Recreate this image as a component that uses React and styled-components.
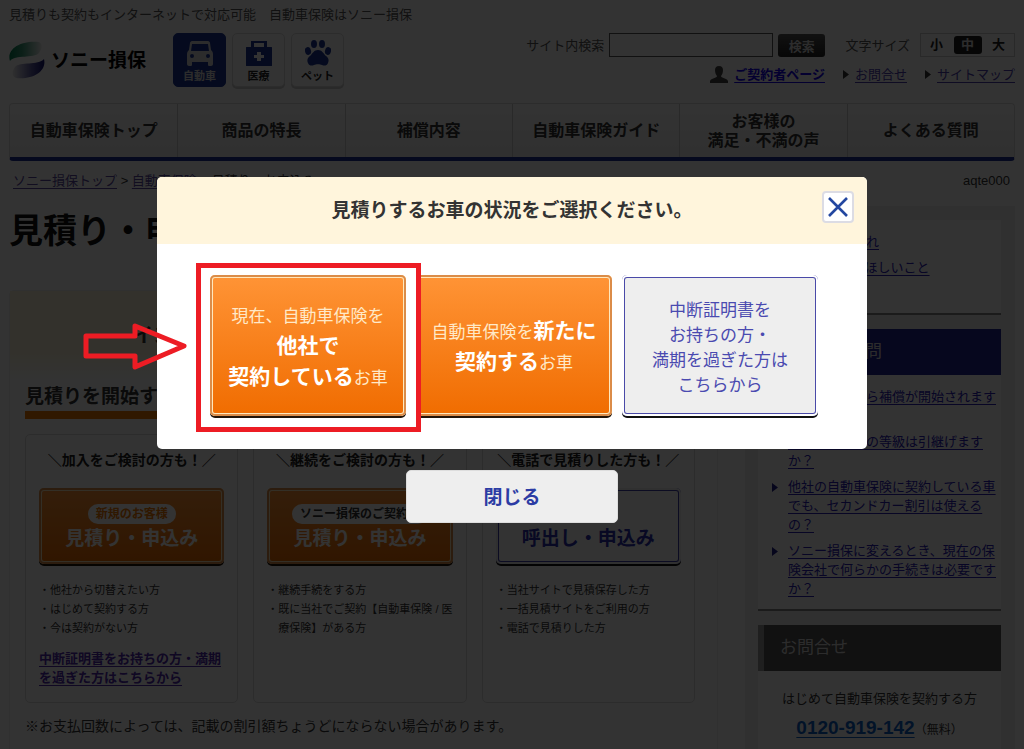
import React, { useState } from "react";
import styled, { createGlobalStyle, css } from "styled-components";

const GlobalStyle = createGlobalStyle`
  * {
    box-sizing: border-box;
  }
  body {
    margin: 0;
    overflow: hidden;
    background: #fff;
    color: #333;
    font-family: "Liberation Sans", "Noto Sans CJK JP", sans-serif;
    font-size: 13px;
    line-height: 19px;
  }
  button, input {
    font-family: inherit;
  }
  h1, h2, h3, p, ul {
    margin: 0;
    padding: 0;
  }
  ul {
    list-style: none;
  }
  a {
    color: #2a20b8;
    text-underline-offset: 3px;
  }
`;

const Page = styled.div`
  padding: 3px 9px 0;
`;

const Lead = styled.p`
  color: #555;
  line-height: 24px;
`;

const Header = styled.header`
  display: flex;
  justify-content: space-between;
  margin-top: 6px;
`;

const Brand = styled.div`
  display: flex;
  align-items: center;
  gap: 6px;
`;

const Logo = styled.a`
  display: flex;
  align-items: center;
  gap: 6px;
  margin-right: 21px;
  color: #000;
  font-size: 19px;
  font-weight: bold;
  text-decoration: none;
`;

const Tile = styled.a`
  display: flex;
  flex-direction: column;
  align-items: center;
  justify-content: flex-end;
  gap: 2px;
  width: 53px;
  height: 54px;
  padding-bottom: 2px;
  border: 1px solid ${(props) => (props.$active ? "#1a3694" : "#ddd")};
  border-radius: 5px;
  background: ${(props) => (props.$active ? "#1a3694" : "#fff")};
  box-shadow: ${(props) => (props.$active ? "none" : "0 2px 0 #ccc")};
  color: ${(props) => (props.$active ? "#ddd" : "#222")};
  font-size: 11px;
  font-weight: bold;
  line-height: 16px;
  text-decoration: none;

  svg {
    color: ${(props) => (props.$active ? "#ddd" : "#1a3694")};
  }
`;

const Tools = styled.div`
  display: flex;
  flex-direction: column;
  align-items: flex-end;
  gap: 8px;
`;

const ToolRow = styled.div`
  display: flex;
  align-items: center;
  color: #555;
`;

const SearchForm = styled.form`
  display: flex;
  align-items: center;
  gap: 5px;
  margin-right: 20px;

  input {
    width: 164px;
    height: 24px;
    border: 1px solid #555;
    background: #fff;
  }
  button {
    width: 47px;
    height: 23px;
    padding: 0;
    border: 0;
    border-radius: 3px;
    background: linear-gradient(#555, #222);
    color: #ddd;
    font-size: 13px;
    font-weight: bold;
  }
`;

const SizeBox = styled.div`
  display: flex;
  align-items: center;
  justify-content: space-around;
  width: 95px;
  height: 24px;
  margin-left: 10px;
  border: 1px solid #ccc;
`;

const SizeButton = styled.button`
  width: 28px;
  height: 18px;
  padding: 0;
  border: 0;
  border-radius: 3px;
  background: ${(props) => (props.$active ? "#222" : "none")};
  color: ${(props) => (props.$active ? "#ddd" : "#222")};
  font-size: 13px;
  font-weight: bold;
  line-height: 18px;
`;

const ToolLink = styled.a`
  display: flex;
  align-items: center;
  gap: 6px;
  margin-left: 18px;
  font-weight: ${(props) => (props.$bold ? "bold" : "normal")};
  color: ${(props) => (props.$bold ? "#1400f0" : "#4a3cb0")};
`;

const Nav = styled.nav`
  display: grid;
  grid-template-columns: repeat(6, 1fr);
  margin-top: 16px;
  border: 1px solid #ddd;
  border-bottom: 4px solid #1c2f98;
  border-radius: 4px;
  background: linear-gradient(#fff, #eee);
`;

const NavLink = styled.a`
  display: flex;
  align-items: center;
  justify-content: center;
  height: 53px;
  border-left: 1px solid #ccc;
  color: #333;
  font-size: 16px;
  font-weight: bold;
  line-height: 19px;
  text-align: center;
  text-decoration: none;
  white-space: pre-line;

  &:first-child {
    border-left: 0;
  }
`;

const Crumbs = styled.div`
  display: flex;
  justify-content: space-between;
  margin-top: 10px;
  padding: 0 5px 0 4px;
  line-height: 20px;

  a {
    color: #5a48a0;
  }
`;

const Columns = styled.div`
  display: grid;
  grid-template-columns: 1fr 270px;
  gap: 27px;
  margin-top: 15px;
`;

const PageTitle = styled.h1`
  margin-bottom: 34px;
  color: #111;
  font-size: 34px;
  line-height: 50px;
`;

const Panel = styled.section`
  border: 1px solid #eee;
  border-radius: 5px;
`;

const Campaign = styled.p`
  background: linear-gradient(#fff6dc, #fff6dc 70%, #fff);
  font-size: 20px;
  font-weight: bold;
  line-height: 90px;
  text-align: center;
`;

const PanelBody = styled.div`
  padding: 2px 22px 20px 15px;
`;

const SectionTitle = styled.h2`
  margin-bottom: 15px;
  border-bottom: 8px solid #f07800;
  font-size: 19px;
  line-height: 28px;
`;

const Cards = styled.div`
  display: grid;
  grid-template-columns: repeat(3, 1fr);
  gap: 15px;
`;

const Card = styled.div`
  min-height: 269px;
  padding: 15px 13px 13px;
  border: 1px solid #ddd;
  border-radius: 5px;
`;

const CardTitle = styled.h3`
  margin-bottom: 18px;
  color: #222;
  font-size: 14px;
  line-height: 20px;
  text-align: center;
  white-space: nowrap;
`;

const orange = css`
  background: linear-gradient(#ff9436, #f06c00);
  box-shadow: inset 0 0 0 2px #db8c48, inset 0 0 0 3px #ffe8bd, 0 2px 0 #221408;
  color: #fff;
`;

const CardButton = styled.button`
  display: flex;
  flex-direction: column;
  align-items: center;
  justify-content: flex-end;
  gap: 2px;
  width: 100%;
  height: 76px;
  padding: 0 0 12px;
  border: 0;
  border-radius: 5px;
  font-size: 19px;
  font-weight: bold;
  line-height: 26px;
  ${orange}
  ${(props) =>
    props.$plain &&
    css`
      background: #fff;
      box-shadow: inset 0 0 0 2px #eee, inset 0 0 0 3px #3c3ca8, 0 2px 0 #111;
      color: #2a30b0;
    `}
`;

const Pill = styled.span`
  padding: 0 8px;
  border-radius: 10px;
  background: #fff;
  color: ${(props) => props.$color};
  font-size: 12px;
  line-height: 20px;
`;

const Notes = styled.ul`
  margin-top: 17px;
  font-size: 11px;

  li {
    padding-left: 11px;
    text-indent: -11px;
  }
`;

const CardLink = styled.a`
  display: block;
  margin-top: 11px;
  color: #5028b0;
  font-weight: bold;
`;

const Remark = styled.p`
  margin-top: 14px;
  font-size: 14px;
`;

const Side = styled.aside`
  padding: 14px 14px 60px 13px;
  background: #eee;
`;

const SideBox = styled.section`
  margin-bottom: 14px;
  border-bottom: 2px solid #888;
  background: #fff;
`;

const SideTitle = styled.h2`
  padding-left: ${(props) => (props.$dark ? "16px" : "22px")};
  border-left: ${(props) => (props.$dark ? "6px solid #999" : "0")};
  background: ${(props) => (props.$dark ? "#555" : "#1e2498")};
  color: #ddd;
  font-size: 17px;
  font-weight: normal;
  line-height: 46px;
`;

const SideList = styled.ul`
  display: flex;
  flex-direction: column;
  gap: 7px;
  padding: 12px 2px 11px 14px;
  min-height: 93px;

  li {
    display: flex;
    gap: 10px;
  }
  svg {
    flex: none;
    margin-top: 6px;
  }
`;

const Contact = styled.div`
  padding: 18px 0 24px;
  text-align: center;

  p {
    line-height: 20px;
  }
`;

const Phone = styled.a`
  color: #0a62c8;
  font-size: 19px;
  font-weight: bold;
  line-height: 38px;
`;

const Small = styled.span`
  font-size: 12px;
`;

const Overlay = styled.div`
  position: fixed;
  inset: 0;
  display: flex;
  flex-direction: column;
  align-items: center;
  gap: 21px;
  padding-top: 177px;
  background: rgba(0, 0, 0, 0.8);
`;

const Dialog = styled.div`
  width: 100%;
  max-width: 710px;
  border-radius: 5px;
  background: #fff;
`;

const DialogHeader = styled.div`
  display: grid;
  grid-template-columns: 32px 1fr 32px;
  align-items: center;
  height: 67px;
  padding: 0 13px 7px;
  border-radius: 5px 5px 0 0;
  background: #fff5dc;

  h2 {
    grid-column: 2;
    padding-top: 7px;
    font-size: 19px;
    line-height: 28px;
    text-align: center;
  }
`;

const IconButton = styled.button`
  display: flex;
  align-items: center;
  justify-content: center;
  width: 32px;
  height: 32px;
  padding: 0;
  border: 2px solid #dcdce4;
  border-radius: 4px;
  background: #fff;
`;

const Choices = styled.div`
  display: grid;
  grid-template-columns: repeat(3, 1fr);
  gap: 10px;
  padding: 31px 49px 33px 53px;
`;

const Choice = styled.div`
  position: relative;
  z-index: ${(props) => (props.$marked ? 1 : 0)};
`;

const ChoiceButton = styled.button`
  width: 100%;
  height: 141px;
  padding: 0;
  border: 0;
  border-radius: 5px;
  font-family: "Noto Sans CJK JP", sans-serif;
  font-size: 17px;
  line-height: 31px;
  white-space: nowrap;
  ${orange}
  color: #ffe9c8;
  ${(props) =>
    props.$plain &&
    css`
      background: #eee;
      box-shadow: inset 0 0 0 2px #fff, inset 0 0 0 3px #4a4aa8, 0 2px 0 #111;
      color: #4a4ab0;
      line-height: 25px;
    `}

  strong {
    color: #fff;
    font-size: 21px;
    line-height: 21px;
  }
`;

const Frame = styled.span`
  position: absolute;
  inset: -12px -15px -16px -14px;
  border: 5px solid #ed1c24;
  pointer-events: none;
`;

const Arrow = styled.svg`
  position: absolute;
  top: 46px;
  left: -127px;
  pointer-events: none;
`;

const CloseButton = styled.button`
  width: 212px;
  height: 53px;
  padding: 0 0 3px;
  border: 1px solid #ddd;
  border-radius: 5px;
  background: #eee;
  color: #2c3ca4;
  font-size: 19px;
  font-weight: bold;
`;

const navItems = [
  "自動車保険トップ",
  "商品の特長",
  "補償内容",
  "自動車保険ガイド",
  "お客様の\n満足・不満の声",
  "よくある質問",
];

const cards = [
  {
    title: "＼加入をご検討の方も！／",
    pill: "新規のお客様",
    color: "#f07800",
    button: "見積り・申込み",
    notes: ["他社から切替えたい方", "はじめて契約する方", "今は契約がない方"],
    link: "中断証明書をお持ちの方・満期を過ぎた方はこちらから",
  },
  {
    title: "＼継続をご検討の方も！／",
    pill: "ソニー損保のご契約者",
    color: "#333",
    button: "見積り・申込み",
    notes: ["継続手続をする方", "既に当社でご契約【自動車保険 / 医療保険】がある方"],
  },
  {
    title: "＼電話で見積りした方も！／",
    button: "呼出し・申込み",
    notes: ["当社サイトで見積保存した方", "一括見積サイトをご利用の方", "電話で見積りした方"],
  },
];

const guides = ["お見積りの流れ", "知っておいてほしいこと"];

const questions = [
  "最短でいつから補償が開始されますか？",
  "今の保険会社の等級は引継げますか？",
  "他社の自動車保険に契約している車でも、セカンドカー割引は使えるの？",
  "ソニー損保に変えるとき、現在の保険会社で何らかの手続きは必要ですか？",
];

function Caret({ color = "#333" }) {
  return (
    <svg width="6" height="9" viewBox="0 0 6 9" aria-hidden="true">
      <path d="M0 0L6 4.5L0 9Z" fill={color} />
    </svg>
  );
}

function LogoMark() {
  return (
    <svg width="36" height="38" viewBox="0 0 36 38" aria-hidden="true">
      <defs>
        <linearGradient id="green">
          <stop offset="0" stopColor="#008050" />
          <stop offset="0.4" stopColor="#3a9a78" />
          <stop offset="1" stopColor="#eee" />
        </linearGradient>
        <linearGradient id="navy">
          <stop offset="0" stopColor="#eee" />
          <stop offset="0.6" stopColor="#5a5aa0" />
          <stop offset="1" stopColor="#101070" />
        </linearGradient>
      </defs>
      <path d="M1 20C-3 8 12 -1 30 1C34 3 33 8 30 12C25 18 6 13 1 20Z" fill="url(#green)" />
      <path d="M35 18C38 30 24 39 7 37C2 35 3 30 6 26C11 20 29 25 35 18Z" fill="url(#navy)" />
    </svg>
  );
}

function CarIcon() {
  return (
    <svg width="26" height="25" viewBox="0 0 26 25" fill="currentColor" aria-hidden="true">
      <path
        fillRule="evenodd"
        d="M5 0H21C22 0 23 1 23 2L24 9C26 11 26 12 26 14V23C26 24 25 25 24 25H22C21 25 21 24 21 23V21H5V23C5 24 5 25 4 25H2C1 25 0 24 0 23V14C0 12 0 11 2 9L3 2C3 1 4 0 5 0ZM5 3L4 10H22L21 3ZM5 13A2 2 0 1 0 5 17A2 2 0 1 0 5 13ZM21 13A2 2 0 1 0 21 17A2 2 0 1 0 21 13Z"
      />
    </svg>
  );
}

function MedicalIcon() {
  return (
    <svg width="26" height="25" viewBox="0 0 26 25" fill="currentColor" aria-hidden="true">
      <path
        fillRule="evenodd"
        d="M5 6V0H21V6H25C26 6 26 6 26 7V24C26 25 26 25 25 25H1C0 25 0 25 0 24V7C0 6 0 6 1 6ZM8 6H18V2H8ZM11 11V14H8V17H11V20H15V17H18V14H15V11Z"
      />
    </svg>
  );
}

function PawIcon() {
  return (
    <svg width="26" height="26" viewBox="0 0 26 26" fill="currentColor" aria-hidden="true">
      <ellipse cx="9" cy="4" rx="3" ry="4" />
      <ellipse cx="17" cy="4" rx="3" ry="4" />
      <ellipse cx="3" cy="11" rx="3" ry="4" transform="rotate(-15 3 11)" />
      <ellipse cx="23" cy="11" rx="3" ry="4" transform="rotate(15 23 11)" />
      <path d="M13 10C17 10 18 13 21 16C24 18 24 21 23 23C22 26 19 26 17 25C15 24 11 24 9 25C7 26 4 26 3 23C2 21 2 18 5 16C8 13 9 10 13 10Z" />
    </svg>
  );
}

function PersonIcon() {
  return (
    <svg width="18" height="17" viewBox="0 0 18 17" fill="#444" aria-hidden="true">
      <path d="M9 0C12 0 13 2 13 4C13 7 12 9 11 10C11 12 17 12 18 15V17H0V15C1 12 7 12 7 10C6 9 5 7 5 4C5 2 6 0 9 0Z" />
    </svg>
  );
}

function LinkList({ items }) {
  return (
    <SideList>
      {items.map((item) => (
        <li key={item}>
          <Caret color="#22208a" />
          <a href="#">{item}</a>
        </li>
      ))}
    </SideList>
  );
}

function CarSelectDialog({ onClose }) {
  return (
    <Overlay>
      <Dialog role="dialog" aria-modal="true" aria-labelledby="dialog-title">
        <DialogHeader>
          <h2 id="dialog-title">見積りするお車の状況をご選択ください。</h2>
          <IconButton type="button" aria-label="閉じる" onClick={onClose}>
            <svg width="20" height="20" viewBox="0 0 20 20" stroke="#2347a0" strokeWidth="2.6">
              <path d="M1 1L19 19M19 1L1 19" />
            </svg>
          </IconButton>
        </DialogHeader>
        <Choices>
          <Choice $marked>
            <ChoiceButton type="button">
              現在、自動車保険を
              <br />
              <strong>他社で</strong>
              <br />
              <strong>契約している</strong>お車
            </ChoiceButton>
            <Frame />
            <Arrow width="106" height="50" viewBox="0 0 106 50" aria-hidden="true">
              <path
                d="M3 15H52V5L101 25L52 46V35H3Z"
                fill="none"
                stroke="#ed1c24"
                strokeWidth="5"
                strokeLinejoin="round"
              />
            </Arrow>
          </Choice>
          <Choice>
            <ChoiceButton type="button">
              自動車保険を<strong>新たに</strong>
              <br />
              <strong>契約する</strong>お車
            </ChoiceButton>
          </Choice>
          <Choice>
            <ChoiceButton type="button" $plain>
              中断証明書を
              <br />
              お持ちの方・
              <br />
              満期を過ぎた方は
              <br />
              こちらから
            </ChoiceButton>
          </Choice>
        </Choices>
      </Dialog>
      <CloseButton type="button" onClick={onClose}>
        閉じる
      </CloseButton>
    </Overlay>
  );
}

function App() {
  const [open, setOpen] = useState(true);
  const [size, setSize] = useState("中");

  return (
    <>
      <GlobalStyle />
      <Page>
        <Lead>見積りも契約もインターネットで対応可能　自動車保険はソニー損保</Lead>
        <Header>
          <Brand>
            <Logo href="#">
              <LogoMark />
              ソニー損保
            </Logo>
            <Tile href="#" $active>
              <CarIcon />
              自動車
            </Tile>
            <Tile href="#">
              <MedicalIcon />
              医療
            </Tile>
            <Tile href="#">
              <PawIcon />
              ペット
            </Tile>
          </Brand>
          <Tools>
            <ToolRow>
              <SearchForm onSubmit={(e) => e.preventDefault()}>
                <label htmlFor="search">サイト内検索</label>
                <input id="search" type="text" />
                <button type="submit">検索</button>
              </SearchForm>
              文字サイズ
              <SizeBox>
                {["小", "中", "大"].map((value) => (
                  <SizeButton
                    key={value}
                    type="button"
                    $active={value === size}
                    onClick={() => setSize(value)}
                  >
                    {value}
                  </SizeButton>
                ))}
              </SizeBox>
            </ToolRow>
            <ToolRow>
              <ToolLink href="#" $bold>
                <PersonIcon />
                ご契約者ページ
              </ToolLink>
              <ToolLink href="#">
                <Caret />
                お問合せ
              </ToolLink>
              <ToolLink href="#">
                <Caret />
                サイトマップ
              </ToolLink>
            </ToolRow>
          </Tools>
        </Header>
        <Nav>
          {navItems.map((item) => (
            <NavLink href="#" key={item}>
              {item}
            </NavLink>
          ))}
        </Nav>
        <Crumbs>
          <span>
            <a href="#">ソニー損保トップ</a> &gt; <a href="#">自動車保険</a> &gt; 見積り・お申込み
          </span>
          <span>aqte000</span>
        </Crumbs>
        <Columns>
          <main>
            <PageTitle>見積り・申込み</PageTitle>
            <Panel>
              <Campaign>インターネットからのお申込みで最大10,000円割引</Campaign>
              <PanelBody>
                <SectionTitle>見積りを開始する</SectionTitle>
                <Cards>
                  {cards.map((card) => (
                    <Card key={card.title}>
                      <CardTitle>{card.title}</CardTitle>
                      <CardButton type="button" $plain={!card.pill} onClick={() => setOpen(true)}>
                        {card.pill && <Pill $color={card.color}>{card.pill}</Pill>}
                        {card.button}
                      </CardButton>
                      <Notes>
                        {card.notes.map((note) => (
                          <li key={note}>・{note}</li>
                        ))}
                      </Notes>
                      {card.link && <CardLink href="#">{card.link}</CardLink>}
                    </Card>
                  ))}
                </Cards>
                <Remark>※お支払回数によっては、記載の割引額ちょうどにならない場合があります。</Remark>
              </PanelBody>
            </Panel>
          </main>
          <Side>
            <SideBox>
              <LinkList items={guides} />
            </SideBox>
            <SideBox>
              <SideTitle>よくある質問</SideTitle>
              <LinkList items={questions} />
            </SideBox>
            <SideBox>
              <SideTitle $dark>お問合せ</SideTitle>
              <Contact>
                <p>はじめて自動車保険を契約する方</p>
                <Phone href="tel:0120919142">0120-919-142</Phone>
                <Small>（無料）</Small>
              </Contact>
            </SideBox>
          </Side>
        </Columns>
      </Page>
      {open && <CarSelectDialog onClose={() => setOpen(false)} />}
    </>
  );
}

export default App;
